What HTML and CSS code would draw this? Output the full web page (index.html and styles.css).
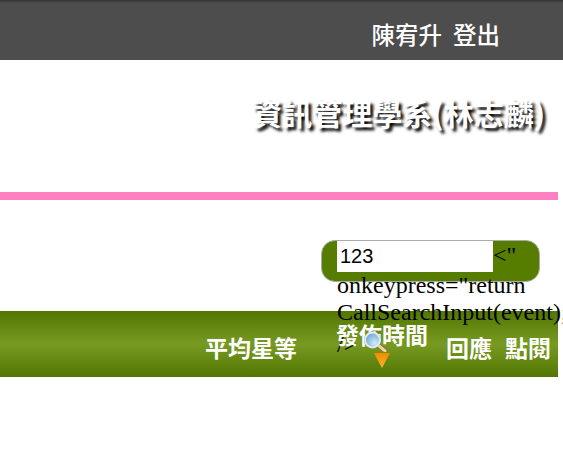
FILE: index.html
```html
<!DOCTYPE html>
<html lang="zh-TW">
<head>
    <meta charset="UTF-8">
    <meta name="viewport" content="width=device-width, initial-scale=1.0">
    <title>資訊管理學系(林志麟)</title>
    <link rel="stylesheet" href="styles.css">
</head>
<body>
    <div class="topbar">
        <span>陳宥升</span>
        <span>登出</span>
    </div>
    <div class="page">
        <h1 class="title">資訊管理學系(林志麟)</h1>
        <div class="divider"></div>
        <div class="search-row">
            <div class="search">
                <input class="search-input" type="text" value="123">&lt;" onkeypress="return CallSearchInput(event);" /&gt;
                <svg class="glass" width="26" height="26" viewBox="0 0 26 26">
                    <defs>
                        <radialGradient id="lensFill" cx="0.65" cy="0.7" r="0.8">
                            <stop offset="0" stop-color="#d4ebf8"/>
                            <stop offset="1" stop-color="#5c9fd6"/>
                        </radialGradient>
                    </defs>
                    <line x1="15" y1="19" x2="22" y2="25" stroke="#8a6a2a" stroke-width="4.5" stroke-linecap="round"/>
                    <line x1="15" y1="19" x2="22" y2="25" stroke="#f2d3a0" stroke-width="3" stroke-linecap="round"/>
                    <circle cx="9.5" cy="14" r="8.5" fill="#5d7080"/>
                    <circle cx="9.5" cy="14" r="7.5" fill="url(#lensFill)" stroke="#e4eaee" stroke-width="2"/>
                </svg>
            </div>
        </div>
        <div class="list-head">
            <div class="col col-star">平均星等</div>
            <div class="col col-date">
                <span>發佈時間</span>
                <svg class="sort" width="16" height="15" viewBox="0 0 16 15">
                    <defs>
                        <linearGradient id="sortFill" x1="0" y1="0" x2="0" y2="1">
                            <stop offset="0" stop-color="#f08c00"/>
                            <stop offset="1" stop-color="#fbb52a"/>
                        </linearGradient>
                    </defs>
                    <polygon points="0,0 16,0 8,15" fill="url(#sortFill)"/>
                </svg>
            </div>
            <div class="col col-reply">回應</div>
            <div class="col col-view">點閱</div>
        </div>
    </div>
</body>
</html>
```
FILE: styles.css
```css
body {
    margin: 0;
    font-family: "Liberation Serif", serif;
    font-size: 24px;
    color: #000;
    background-color: #fff;
}
.topbar {
    height: 60px;
    box-sizing: border-box;
    padding: 18px 63px 0 0;
    display: flex;
    justify-content: flex-end;
    gap: 11px;
    background: linear-gradient(#333 0, #4d4d4d 3px);
    color: #fff;
    font-family: "Noto Sans CJK TC", sans-serif;
    font-size: 23.5px;
    font-weight: 500;
    line-height: 32px;
}
.page {
    width: 558px;
}
.title {
    margin: 0;
    height: 132px;
    box-sizing: border-box;
    padding: 33px 13px 0 0;
    text-align: right;
    font-family: "Noto Sans CJK TC", sans-serif;
    font-size: 30px;
    line-height: 38px;
    font-weight: 700;
    color: #fff;
    text-shadow: 3px 3px 3px #000;
}
.divider {
    height: 8px;
    background-color: #ff80c0;
}
.search-row {
    display: flex;
    justify-content: flex-end;
    padding: 40px 18px 0 0;
}
.search {
    width: 219px;
    height: 42px;
    box-sizing: border-box;
    padding: 0 0 0 15px;
    background-color: #567d00;
    border: 1px solid #aaa;
    border-radius: 14px;
}
.search-input {
    width: 156px;
    height: 31px;
    box-sizing: border-box;
    border: 0;
    padding: 0 3px;
    font-family: "Liberation Sans", sans-serif;
    font-size: 20px;
}
/* sits in the text flow but has to paint over the column titles */
.glass {
    position: relative;
    z-index: 1;
}
.list-head {
    margin-top: 29px;
    height: 66px;
    display: flex;
    background: linear-gradient(#527600 0, #769a22 50%, #527600 100%);
    color: #fff;
    font-family: "Noto Sans CJK TC", sans-serif;
    font-size: 23px;
    font-weight: 700;
    line-height: 30px;
}
.col {
    padding-top: 21px;
}
.col-star {
    margin-left: 205px;
}
.col-date {
    position: relative;
    margin-left: 39px;
    width: 110px;
    padding-top: 8px;
}
.col-reply {
    width: 59px;
}
.sort {
    position: absolute;
    left: 38px;
    top: 42px;
}
```
